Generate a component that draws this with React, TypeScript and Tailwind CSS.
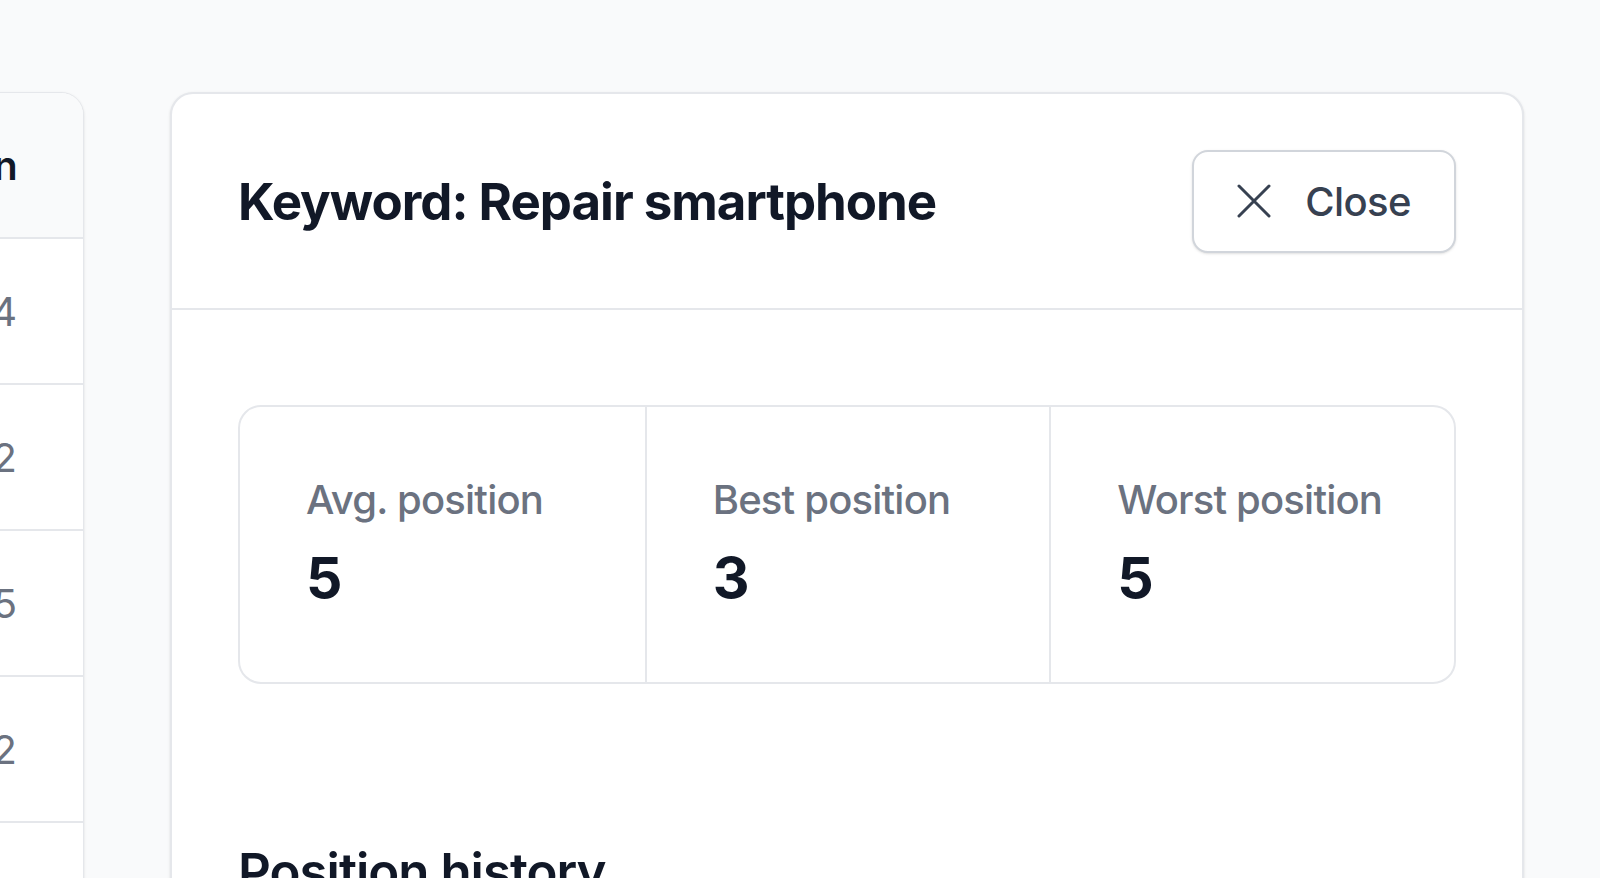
import React from 'react'

type Stat = {
	label: string;
	value: number;
}

const stats: Stat[] = [
	{ label: "Avg. position", value: 5 },
	{ label: "Best position", value: 3 },
	{ label: "Worst position", value: 5 },
];

const rows = [
	{ keyword: "Repair smartphone", position: 4 },
	{ keyword: "Phone screen repair", position: 2 },
	{ keyword: "Battery replacement", position: 5 },
	{ keyword: "Cracked screen fix", position: 2 },
	{ keyword: "iPhone repair", position: 3 },
];

const XIcon = () => (
	<svg width="34" height="34" viewBox="0 0 34 34" fill="none" stroke="currentColor" strokeWidth="3" strokeLinecap="round">
		<path d="M2 2L32 32M32 2L2 32" />
	</svg>
)

const KeywordTable = () => {
	return (
		<div className="w-[600px] ml-[-516px] shrink-0 self-start rounded-[23px] border border-[#e5e7eb] bg-white shadow-sm overflow-hidden">
			<div className="h-[146px] flex items-center justify-between px-[66px] bg-[#f9fafb] border-b-2 border-[#e5e7eb]">
				<span className="text-[40px] leading-[57px] font-semibold tracking-[-0.8px] text-[#111827]">Keyword</span>
				<span className="text-[40px] leading-[57px] font-semibold tracking-[-0.8px] text-[#111827]">Position</span>
			</div>
			{rows.map((row) => (
				<div key={row.keyword} className="h-[146px] flex items-center justify-between px-[66px] border-b-2 border-[#e5e7eb]">
					<span className="text-[40px] leading-[57px] tracking-[-0.8px] text-[#111827]">{row.keyword}</span>
					<span className="text-[40px] leading-[57px] text-[#6b7280]">{row.position}</span>
				</div>
			))}
		</div>
	)
}

const KeywordPanel = () => {
	return (
		<div className="w-[1354px] shrink-0 self-start rounded-[23px] border-2 border-[#e5e7eb] bg-white shadow-sm">
			<div className="h-[216px] flex items-center justify-between px-[66px] border-b-2 border-[#e5e7eb]">
				<h1 className="text-[51px] leading-[79px] font-bold text-[#111827] tracking-[-1px]">Keyword: Repair smartphone</h1>
				<button className="h-[103px] w-[264px] flex items-center justify-center gap-[34px] rounded-[16px] border-2 border-[#d1d5db] bg-white shadow-sm text-[#374151]">
					<XIcon />
					<span className="text-[40px] leading-[57px] font-medium tracking-[-0.6px]">Close</span>
				</button>
			</div>
			<div className="px-[66px] pt-[95px] pb-[200px]">
				<div className="grid grid-cols-3 rounded-[23px] border-2 border-[#e5e7eb]">
					{stats.map((stat, i) => (
						<div key={stat.label} className={`px-[66px] py-[64px] ${i > 0 ? "border-l-2 border-[#e5e7eb]" : ""}`}>
							<div className="whitespace-nowrap text-[40px] leading-[57px] font-medium tracking-[-0.8px] text-[#6b7280]">{stat.label}</div>
							<div className="mt-[10px] text-[57px] leading-[80px] font-bold text-[#111827]">{stat.value}</div>
						</div>
					))}
				</div>
				<h2 className="mt-[148px] text-[51px] leading-[79px] font-semibold tracking-[-1px] text-[#111827]">Position history</h2>
			</div>
		</div>
	)
}

const App = () => {
	return (
		<div className="h-[878px] w-[1600px] overflow-hidden bg-[#f9fafb] font-['Inter',sans-serif]">
			<div className="flex flex-row gap-[86px] pt-[92px]">
				<KeywordTable />
				<KeywordPanel />
			</div>
		</div>
	)
}

export default App
